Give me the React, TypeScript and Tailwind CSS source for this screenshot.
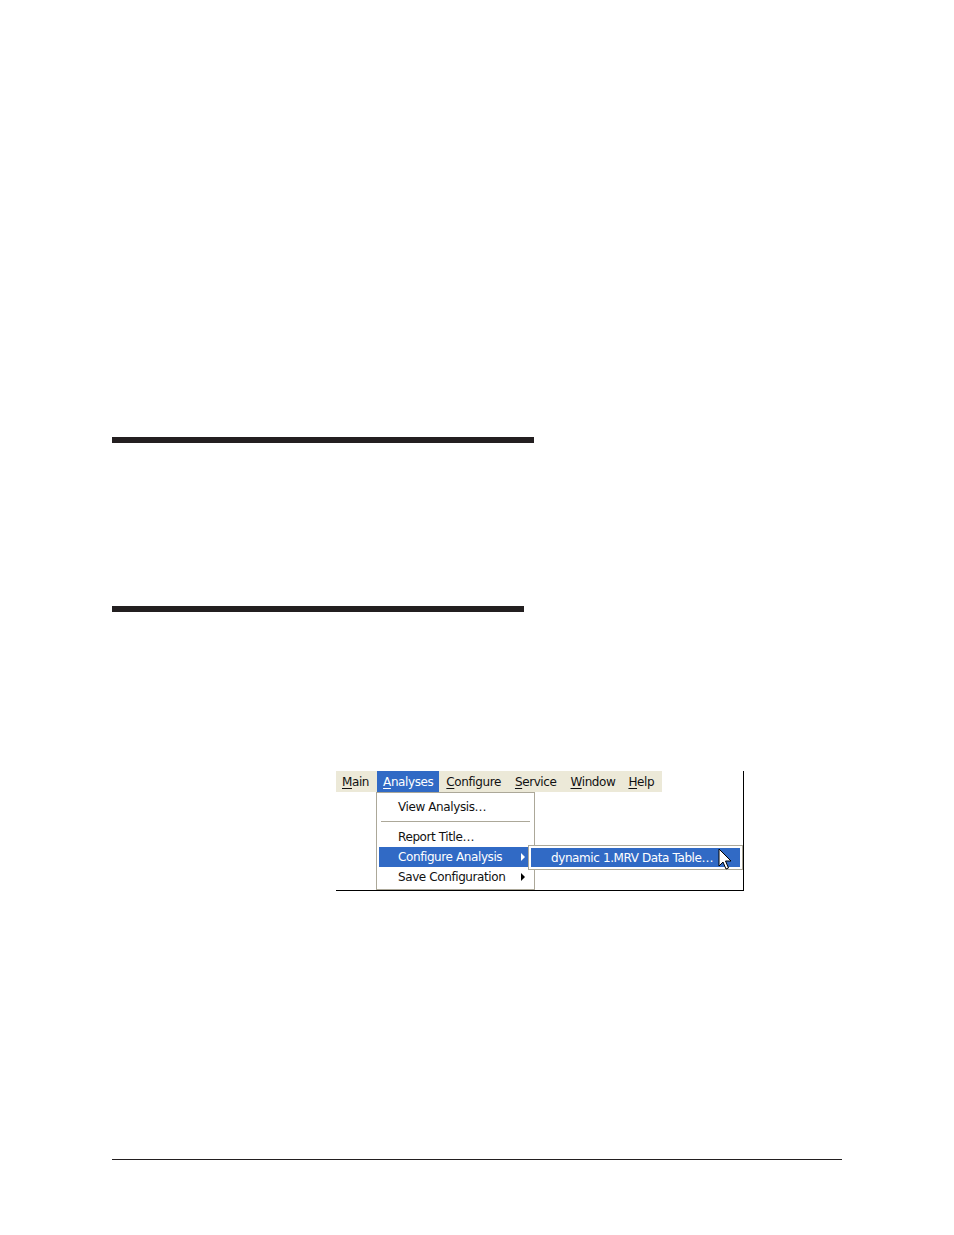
import React from "react";

function U({ c }: { c: string }) {
  return <span className="underline underline-offset-2 decoration-1">{c}</span>;
}

function Arrow({ white }: { white?: boolean }) {
  return (
    <svg width="4" height="8" viewBox="0 0 4 8" className="block">
      <path d="M0 0 L4 4 L0 8 Z" fill={white ? "#ffffff" : "#000000"} />
    </svg>
  );
}

function Cursor() {
  return (
    <svg width="14" height="24" viewBox="0 0 14 24" className="block">
      <path
        d="M1 1 L1 18 L5 14 L8 21 L10.5 20 L7.5 13 L13 13 Z"
        fill="#ffffff"
        stroke="#000000"
        strokeWidth="1"
        strokeLinejoin="miter"
      />
    </svg>
  );
}

export default function App() {
  const font = { fontFamily: '"DejaVu Sans", "Liberation Sans", sans-serif' };
  return (
    <div className="w-[954px] h-[1235px] bg-white relative overflow-hidden">
      <div className="pt-[437px] pl-[112px] flex flex-col">
        <div className="w-[422px] h-[6px] bg-[#231f20]" />
        <div className="w-[412px] h-[6px] bg-[#231f20] mt-[163px]" />
        <div className="ml-[224px] mt-[159px] w-[408px] h-[120px] border-r border-b border-black relative" style={font}>
          <div className="w-[326px] h-[21px] bg-[#ece9d8] flex items-center text-[12px] leading-none text-[#111] tracking-[-0.4px]">
            <div className="h-full flex items-center px-[6px]">
              <span><U c="M" />ain</span>
            </div>
            <div className="h-full flex items-center px-[6px] bg-[#316ac5] text-white ml-[2px]">
              <span><U c="A" />nalyses</span>
            </div>
            <div className="h-full flex items-center px-[7px]">
              <span><U c="C" />onfigure</span>
            </div>
            <div className="h-full flex items-center px-[7px]">
              <span><U c="S" />ervice</span>
            </div>
            <div className="h-full flex items-center px-[7px]">
              <span><U c="W" />indow</span>
            </div>
            <div className="h-full flex items-center px-[6px]">
              <span><U c="H" />elp</span>
            </div>
          </div>

          <div className="absolute left-[40px] top-[21px] w-[159px] h-[98px] bg-white border border-[#aca899] text-[12px] leading-none text-[#111] tracking-[-0.4px] px-[2px] pt-[3px]">
            <div className="h-[21px] flex items-center pl-[19px]">View Analysis…</div>
            <div className="h-[8px] flex items-center px-[2px]">
              <div className="w-full h-px bg-[#aca899]" />
            </div>
            <div className="h-[22px] flex items-center pl-[19px] pt-[2px]">Report Title…</div>
            <div className="h-[20px] flex items-center pl-[19px] pr-[7px] bg-[#316ac5] text-white justify-between">
              <span>Configure Analysis</span>
              <Arrow white />
            </div>
            <div className="h-[19px] flex items-center pl-[19px] pr-[7px] justify-between">
              <span>Save Configuration</span>
              <Arrow />
            </div>
          </div>

          <div className="absolute left-[192px] top-[74px] w-[215px] h-[25px] bg-white border border-[#aca899] p-[2px] text-[12px] leading-none tracking-[-0.4px]">
            <div className="h-full bg-[#316ac5] text-white flex items-center pl-[20px]">
              dynamic 1.MRV Data Table…
            </div>
          </div>

          <div className="absolute left-[382px] top-[77px]">
            <Cursor />
          </div>
        </div>
        <div className="w-[730px] h-px bg-[#231f20] mt-[268px]" />
      </div>
    </div>
  );
}
